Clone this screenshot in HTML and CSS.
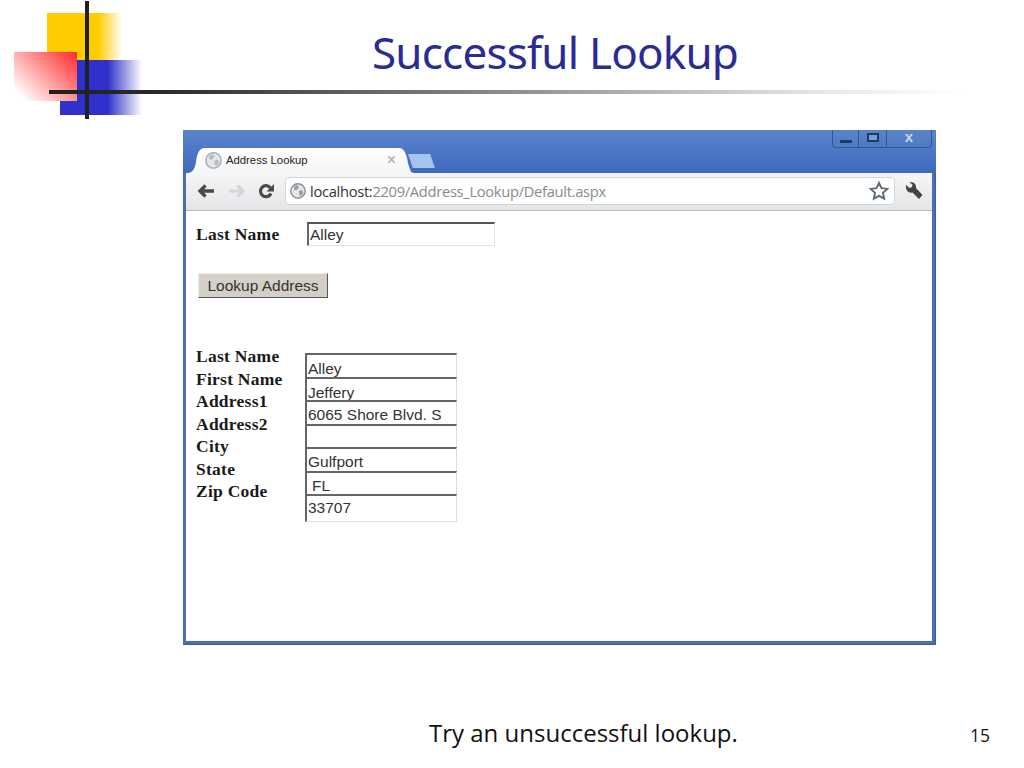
FILE: index.html
```html
<!DOCTYPE html>
<html lang="en">
<head>
<meta charset="utf-8">
<title>Successful Lookup</title>
<link rel="stylesheet" href="styles.css">
</head>
<body>
<main class="slide">
  <div class="logo" aria-hidden="true">
    <div class="sq-yellow"></div>
    <div class="sq-blue"></div>
    <div class="sq-red"></div>
    <div class="bar-v"></div>
  </div>
  <div class="rule"></div>
  <header class="title-row"><h1 class="title">Successful Lookup</h1></header>
  <section class="window">
    <div class="titlebar">
      <div class="tab">
        <svg class="globe" viewBox="0 0 16 16"><circle cx="8" cy="8" r="7.2" fill="#e4e7ea" stroke="#a9aeb2" stroke-width="1.4"/><path d="M4 3.500l3-1.500 2 2-2 3-3 0zM9 8l3-1 1.500 3-3 3.500-1.500-2.500z" fill="#b4babe"/></svg>
        <span class="tab-text">Address Lookup</span>
        <span class="tab-close">×</span>
      </div>
      <div class="newtab"></div>
      <div class="winctl">
        <span class="ctl ctl-min"><i></i></span>
        <span class="ctl ctl-max"><i></i></span>
        <span class="ctl ctl-close">x</span>
      </div>
    </div>
    <div class="toolbar">
      <svg class="nav" viewBox="0 0 18 14"><path d="M8.500 1.500L3 7l5.500 5.500M3.500 7H17" fill="none" stroke="#4a4a4a" stroke-width="3.400"/></svg>
      <svg class="nav" viewBox="0 0 18 14"><path d="M9.500 1.500L15 7l-5.500 5.500M14.500 7H1" fill="none" stroke="#d2d6da" stroke-width="3"/></svg>
      <svg class="nav nav-reload" viewBox="0 0 18 16"><path d="M14 10.500A5.500 5.500 0 1 1 13.500 5" fill="none" stroke="#4a4a4a" stroke-width="3.200"/><path d="M17 1v7.500H9.500z" fill="#4a4a4a"/></svg>
      <div class="omnibox">
        <svg class="globe" viewBox="0 0 16 16"><circle cx="8" cy="8" r="7.200" fill="#e4e7ea" stroke="#8a9094" stroke-width="1.400"/><path d="M4 3.500l3-1.500 2 2-2 3-3 0zM9 8l3-1 1.500 3-3 3.500-1.500-2.500z" fill="#9aa1a5"/></svg>
        <span class="url"><span class="host">localhost:</span>2209/Address_Lookup/Default.aspx</span>
        <svg class="star" viewBox="0 0 20 20"><path d="M10 1.800l2.500 5.400 5.900.7-4.400 4 1.200 5.800-5.200-2.900-5.200 2.900 1.200-5.800-4.400-4 5.900-.7z" fill="#fff" stroke="#5c6a76" stroke-width="1.900"/></svg>
      </div>
      <svg class="wrench" viewBox="0 0 18 18"><path d="M1 3l3.500 3 2.500-1 .5-2.500-3-2C8-.5 11.500 1.500 11 6l6.500 7-3.500 4-6.500-6.500C3.500 11.500.2 8 1 3z" fill="#444"/></svg>
    </div>
    <div class="page">
      <div class="lookup-row">
        <label class="label">Last Name</label>
        <div class="field field-lookup">Alley</div>
      </div>
      <button class="btn" type="button">Lookup Address</button>
      <div class="results">
        <ul class="labels">
          <li>Last Name</li>
          <li>First Name</li>
          <li>Address1</li>
          <li>Address2</li>
          <li>City</li>
          <li>State</li>
          <li>Zip Code</li>
        </ul>
        <div class="values">
          <div class="val clip">Alley</div>
          <div class="val clip">Jeffery</div>
          <div class="val">6065 Shore Blvd. S</div>
          <div class="val"></div>
          <div class="val">Gulfport</div>
          <div class="val indent">FL</div>
          <div class="val last">33707</div>
        </div>
      </div>
    </div>
  </section>
  <footer class="foot">
    <span class="caption">Try an unsuccessful lookup.</span>
    <span class="num">15</span>
  </footer>
</main>
</body>
</html>
```
FILE: styles.css
```css
* { box-sizing: border-box; }
html, body { margin: 0; padding: 0; background: #fff; }
.slide { position: relative; width: 1024px; height: 768px; overflow: hidden; display: flex; flex-direction: column; font-family: "Liberation Sans", Arial, sans-serif; }

.logo { position: absolute; left: 0; top: 0; width: 150px; height: 125px; }
.logo div { position: absolute; }
.sq-yellow { left: 47px; top: 13px; width: 75px; height: 48px; background: linear-gradient(90deg, #ffcc00 0, #ffcc00 68%, rgba(255,204,0,0) 100%); }
.sq-blue { left: 60px; top: 60px; width: 82px; height: 55px; background: linear-gradient(90deg, #3030cc 0, #3030cc 58%, rgba(48,48,204,0) 100%); }
.sq-red { left: 14px; top: 52px; width: 63px; height: 49px; background: linear-gradient(45deg, #fff 10%, #ff2a2a 100%); }
.bar-v { left: 85px; top: 1px; width: 4px; height: 118px; background: #1f1f2a; }
.rule { position: absolute; left: 49px; top: 90px; width: 915px; height: 4px; background: linear-gradient(90deg, #1f1f1f 0, #2a2a2a 12%, #808080 45%, #e8e8e8 85%, #fff 100%); }

.title-row { height: 130px; padding-left: 372px; flex: none; }
.title { margin: 0; padding-top: 24px; font-family: "Noto Sans", sans-serif; font-weight: 400; font-size: 44px; line-height: 56px; letter-spacing: -0.8px; color: #2b2b96; white-space: nowrap; }

.window { flex: none; margin-left: 183px; width: 753px; height: 515px; display: flex; flex-direction: column; background: #4a70b4; padding: 0 3px 3px 3px; border-radius: 3px 3px 0 0; border-bottom: 1px solid #3d5c98; border-right: 1px solid #3d5c98; }

.titlebar { height: 43px; flex: none; display: flex; align-items: flex-end; background: linear-gradient(180deg, #5a84c8 0, #3f69bf 100%); position: relative; margin: 0 -4px 0 -3px; padding-left: 4px; }
.tab { width: 227px; height: 25px; background: linear-gradient(180deg, #fff 0, #f4f5f7 100%); clip-path: path("M0 25C6 25 8 20 9 14C10 6 12 0 18 0H212C218 0 220 8 221 15C223 22 224 25 227 25Z"); display: flex; align-items: center; padding: 0 18px 1px 18px; }
.tab .globe { width: 17px; height: 17px; margin-right: 4px; }
.tab-text { font-size: 11.300px; color: #222; flex: 1; white-space: nowrap; }
.tab-close { color: #a8a8a8; font-size: 16px; line-height: 1; }
.newtab { width: 27px; height: 14px; margin: 0 0 5px -6px; background: #a4c4ee; clip-path: polygon(0 0, 82% 0, 100% 100%, 18% 100%); }
.winctl { position: absolute; right: 4px; top: 0; height: 18px; width: 100px; display: flex; border: 1px solid #34568f; border-top: 0; border-radius: 0 0 4px 4px; }
.ctl { flex: 1; display: flex; align-items: center; justify-content: center; border-right: 1px solid #34568f; color: #24406e; font-size: 15px; font-weight: 700; line-height: 1; }
.ctl-min { flex: none; width: 26px; }
.ctl-max { flex: none; width: 28px; }
.ctl-close { border-right: 0; padding-bottom: 4px; color: #c9d6ea; }
.ctl-min i { display: block; width: 12px; height: 3px; background: #1f3a66; margin-top: 6px; }
.ctl-max i { display: block; width: 12px; height: 9px; border: 2px solid #1f3a66; margin-top: -2px; background: #7b9fd6; }

.toolbar { height: 38px; flex: none; display: flex; align-items: center; padding: 0 0 1px 11px; background: linear-gradient(180deg, #f6f6f7 0, #e4e5e7 100%); border-bottom: 1px solid #b8babc; }
.nav { width: 18px; height: 14px; margin-right: 13px; }
.nav:nth-child(2) { margin-right: 11px; }
.nav-reload { height: 16px; margin-right: 10px; }
.omnibox { width: 610px; height: 28px; background: #fff; border: 1px solid #d2d4d6; border-radius: 4px; display: flex; align-items: center; padding: 0 4px; }
.omnibox .globe { width: 16px; height: 16px; margin-right: 4px; flex: none; }
.url { flex: 1; font-family: "Open Sans", sans-serif; font-size: 14.700px; letter-spacing: -0.3px; color: #8a8a8a; white-space: nowrap; }
.host { color: #333; }
.star { width: 20px; height: 20px; margin-right: 1px; }
.wrench { width: 18px; height: 18px; margin-left: 10px; }

.page { flex: 1; background: #fff; padding: 11px 0 0 9px; }
.label, .labels { font-family: "Liberation Serif", serif; font-weight: 700; font-size: 17.500px; letter-spacing: 0.25px; color: #1a1a1a; }
.label { padding-left: 1px; }
.lookup-row { display: flex; align-items: center; height: 24px; }
.label { width: 112px; flex: none; }
.field { font-size: 15.500px; color: #333; }
.field-lookup { width: 188px; height: 24px; border: 1px solid #e2e2e2; border-top: 2px solid #555; border-left: 2px solid #666; line-height: 22px; padding-left: 1px; }
.btn { display: block; margin: 27px 0 0 3px; width: 130px; height: 25px; padding: 0; background: #d4d0c8; border: 1px solid; border-color: #f0eee8 #555 #555 #f0eee8; font-family: "Liberation Sans", sans-serif; font-size: 15.500px; color: #333; }

.results { display: flex; margin-top: 46px; }
.labels { list-style: none; margin: 1px 0 0; padding: 0 0 0 1px; width: 110px; flex: none; }
.labels li { height: 22.500px; line-height: 22.500px; white-space: nowrap; }
.values { width: 152px; margin-top: 9px; }
.val { height: 23.500px; border-top: 2px solid #666; border-left: 2px solid #666; border-right: 1px solid #ddd; font-size: 15.500px; line-height: 21px; padding: 2px 0 0 1px; color: #333; overflow: hidden; white-space: nowrap; }
.clip { line-height: 22px; padding-top: 3px; }
.indent { padding-left: 5px; padding-top: 2px; }
.last { height: 28px; padding-top: 1px; border-bottom: 1px solid #ddd; }

.foot { flex: 1; position: relative; display: flex; align-items: flex-start; padding: 72px 0 0 429px; }
.caption { font-family: "Open Sans", sans-serif; font-size: 24px; line-height: 32px; color: #111; white-space: nowrap; }
.num { position: absolute; left: 970px; top: 78px; font-family: "Open Sans", sans-serif; font-size: 17.500px; color: #111; }
```
